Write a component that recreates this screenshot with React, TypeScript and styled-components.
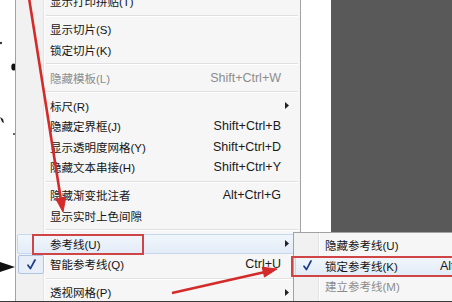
import React from 'react'
import styled, { createGlobalStyle, css } from 'styled-components'

type Entry =
  | { kind: 'sep' }
  | {
      kind: 'item'
      label: string
      shortcut?: string
      disabled?: boolean
      submenu?: boolean
      checked?: boolean
      active?: boolean
    }

const sep: Entry = { kind: 'sep' }
const item = (label: string, extra: Partial<Omit<Extract<Entry, { kind: 'item' }>, 'kind' | 'label'>> = {}): Entry => ({
  kind: 'item',
  label,
  ...extra,
})

const viewItems: Entry[] = [
  item('显示打印拼贴(T)'),
  sep,
  item('显示切片(S)'),
  item('锁定切片(K)'),
  sep,
  item('隐藏模板(L)', { shortcut: 'Shift+Ctrl+W', disabled: true }),
  sep,
  item('标尺(R)', { submenu: true }),
  item('隐藏定界框(J)', { shortcut: 'Shift+Ctrl+B' }),
  item('显示透明度网格(Y)', { shortcut: 'Shift+Ctrl+D' }),
  item('隐藏文本串接(H)', { shortcut: 'Shift+Ctrl+Y' }),
  sep,
  item('隐藏渐变批注者', { shortcut: 'Alt+Ctrl+G' }),
  item('显示实时上色间隙'),
  sep,
  item('参考线(U)', { submenu: true, active: true }),
  item('智能参考线(Q)', { shortcut: 'Ctrl+U', checked: true }),
  sep,
  item('透视网格(P)', { submenu: true }),
]

// the submenu runs off the right edge; only the start of one shortcut shows
const guideItems: Entry[] = [
  item('隐藏参考线(U)'),
  item('锁定参考线(K)', { shortcut: 'Alt+Ctrl+;', checked: true, active: true }),
  item('建立参考线(M)', { disabled: true }),
]

const CheckMark = () => (
  <svg width="9" height="11" viewBox="0 0 9 11">
    <path d="M1 6.2 L3.4 9.6 L8 1" fill="none" stroke="#1c3a8c" strokeWidth="1.7" strokeLinecap="round" strokeLinejoin="round" />
  </svg>
)

const SubArrow = () => (
  <svg width="4" height="7" viewBox="0 0 4 7">
    <path d="M0 0 L4 3.5 L0 7 Z" fill="#222" />
  </svg>
)

const MenuList: React.FC<{ entries: Entry[]; sub?: boolean }> = ({ entries, sub }) => (
  <>
    {entries.map((e, i) =>
      e.kind === 'sep' ? (
        <Separator key={i} />
      ) : (
        <Row key={i} $active={e.active} $sub={sub}>
          <Gutter $checked={e.checked && !sub}>{e.checked && <CheckMark />}</Gutter>
          <Label $disabled={e.disabled}>{e.label}</Label>
          <Shortcut $disabled={e.disabled}>{e.shortcut}</Shortcut>
          <ArrowCell>{e.submenu && <SubArrow />}</ArrowCell>
        </Row>
      ),
    )}
  </>
)

const App: React.FC = () => {
  return (
    <Stage>
      <GlobalStyle />
      <Canvas>
        <svg width="15" height="302" viewBox="0 0 15 302">
          <ellipse cx="1" cy="43" rx="1" ry="1.2" fill="#222" />
          <ellipse cx="13.5" cy="67" rx="2.2" ry="3.6" fill="#111" />
          <path d="M0 117 L3 119 L4 123 L2 122 Z" fill="#222" />
          <circle cx="14" cy="134" r="1" fill="#333" />
          <path d="M0 262 L15 267 L0 272 Z" fill="#111" />
        </svg>
      </Canvas>

      <Menu>
        <MenuList entries={viewItems} />
      </Menu>

      <Backdrop>
        <Strip />
        <DarkPanel />
      </Backdrop>

      <SubMenu>
        <MenuList entries={guideItems} sub />
      </SubMenu>

      <RedBox $left={32} $top={234} $width={112} $height={21} />
      <RedBox $left={291} $top={256} $width={180} $height={21} />

      <Overlay width="452" height="302" viewBox="0 0 452 302">
        <g fill="#d42a2a" stroke="#d42a2a">
          <line x1="29" y1="-2" x2="61" y2="200" strokeWidth="2.6" />
          <polygon points="63,212 65.7,197.4 55.9,199" strokeWidth="1" />
          <line x1="172" y1="293" x2="265" y2="272" strokeWidth="2.4" />
          <polygon points="277,269 264.5,277 262.2,267.2" strokeWidth="1" />
        </g>
      </Overlay>
      <BottomEdge />
    </Stage>
  )
}

export default App

const GlobalStyle = createGlobalStyle`
  html, body {
    margin: 0;
    padding: 0;
    background: #fff;
  }
`

const Stage = styled.div`
  position: relative;
  display: flex;
  width: 452px;
  height: 302px;
  overflow: hidden;
  background: #fff;
  font-family: "Liberation Sans", "Noto Sans CJK SC", sans-serif;
  color: #151515;
`

const Canvas = styled.div`
  width: 15px;
  flex-shrink: 0;
  svg {
    display: block;
  }
`

const Menu = styled.div`
  display: flex;
  flex-direction: column;
  align-self: flex-start;
  flex-shrink: 0;
  width: 286px;
  box-sizing: border-box;
  margin-top: -9px;
  padding-bottom: 20px;
  border-left: 1px solid #a2a2a2;
  border-right: 1px solid #a2a2a2;
  background: linear-gradient(
    to right,
    #f1f1f1 0 27px,
    #e2e3e3 27px 28px,
    #fdfdfd 28px 29px,
    #f6f6f6 29px
  );
`

const SubMenu = styled(Menu)`
  position: absolute;
  left: 293px;
  top: 232px;
  width: 242px;
  margin-top: 0;
  padding-top: 2px;
  border: 1px solid #a2a2a2;
  background: linear-gradient(
    to right,
    #f1f1f1 0 24px,
    #e2e3e3 24px 25px,
    #fdfdfd 25px 26px,
    #f6f6f6 26px
  );
`

const Separator = styled.div`
  height: 7.5px;
  margin: 0 2px 0 30px;
  position: relative;
  &::after {
    content: '';
    position: absolute;
    left: 0;
    right: 0;
    top: 3px;
    height: 1px;
    background: #e0e0e0;
    border-bottom: 1px solid #fff;
  }
`

const Row = styled.div<{ $active?: boolean; $sub?: boolean }>`
  display: grid;
  grid-template-columns: ${(p) => (p.$sub ? '25px 1fr auto 40px' : '28px 1fr auto 17px')};
  align-items: center;
  height: 20.5px;
  box-sizing: border-box;
  margin: 0 1px;
  border: 1px solid transparent;
  border-radius: 2px;
  ${(p) =>
    p.$active &&
    css`
      background: linear-gradient(to bottom, #f1f6fc, #e2ebf7);
      border-color: #c5d7ee;
    `}
`

const Gutter = styled.div<{ $checked?: boolean }>`
  height: 100%;
  display: flex;
  align-items: center;
  justify-content: center;
  box-sizing: border-box;
  margin-right: 2px;
  border: 1px solid transparent;
  border-radius: 2px;
  ${(p) =>
    p.$checked &&
    css`
      background: #e7eef8;
      border-color: #adc6e6;
    `}
  svg {
    display: block;
  }
`

const Label = styled.span<{ $disabled?: boolean }>`
  padding-left: 4px;
  font-size: 11.5px;
  white-space: nowrap;
  color: ${(p) => (p.$disabled ? '#8d8d8d' : '#151515')};
`

const Shortcut = styled.span<{ $disabled?: boolean }>`
  font-size: 12.5px;
  white-space: nowrap;
  color: ${(p) => (p.$disabled ? '#8d8d8d' : '#1a1a1a')};
`

const ArrowCell = styled.div`
  display: flex;
  align-items: center;
  justify-content: flex-end;
  padding-right: 9px;
  svg {
    display: block;
  }
`

const Backdrop = styled.div`
  flex: 1;
  display: flex;
  align-items: flex-start;
`

const Strip = styled.div`
  width: 30px;
  height: 232px;
  background: #fff;
`

const DarkPanel = styled.div`
  flex: 1;
  height: 232px;
  background: #595959;
`

const RedBox = styled.div<{ $left: number; $top: number; $width: number; $height: number }>`
  position: absolute;
  left: ${(p) => p.$left}px;
  top: ${(p) => p.$top}px;
  width: ${(p) => p.$width}px;
  height: ${(p) => p.$height}px;
  box-sizing: border-box;
  border: 2.5px solid #cf4545;
  pointer-events: none;
`

const Overlay = styled.svg`
  position: absolute;
  left: 0;
  top: 0;
  pointer-events: none;
`

const BottomEdge = styled.div`
  position: absolute;
  left: 0;
  right: 0;
  bottom: 0;
  height: 1px;
  background: #3a3a3a;
`
